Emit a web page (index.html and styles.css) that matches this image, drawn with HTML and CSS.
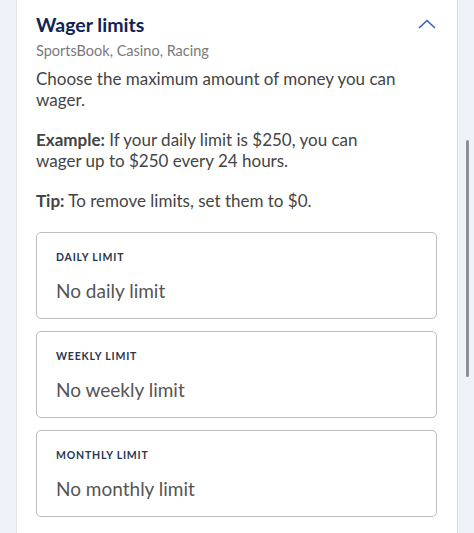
FILE: index.html
```html
<!DOCTYPE html>
<html lang="en">
<head>
    <meta charset="UTF-8">
    <meta name="viewport" content="width=device-width, initial-scale=1.0">
    <title>Wager limits</title>
    <link rel="stylesheet" href="styles.css">
</head>
<body>
    <div class="gutter"></div>

    <div class="panel">
        <div class="header">
            <h2 class="title">Wager limits</h2>
            <svg class="chevron" width="18" height="10" viewBox="0 0 18 10">
                <path d="M1 9 L9 1.5 L17 9" fill="none" stroke="#2e62bd" stroke-width="1.6"/>
            </svg>
        </div>
        <div class="subtitle">SportsBook, Casino, Racing</div>

        <p>Choose the maximum amount of money you can wager.</p>
        <p><strong>Example:</strong> If your daily limit is $250, you can wager up to $250 every 24 hours.</p>
        <p><strong>Tip:</strong> To remove limits, set them to $0.</p>

        <div class="limits">
            <div class="limit-box">
                <div class="limit-label">DAILY LIMIT</div>
                <div class="limit-value">No daily limit</div>
            </div>
            <div class="limit-box">
                <div class="limit-label">WEEKLY LIMIT</div>
                <div class="limit-value">No weekly limit</div>
            </div>
            <div class="limit-box">
                <div class="limit-label">MONTHLY LIMIT</div>
                <div class="limit-value">No monthly limit</div>
            </div>
        </div>
    </div>

    <div class="gutter right">
        <div class="thumb"></div>
    </div>
</body>
</html>
```

FILE: styles.css
```css
body {
    margin: 0;
    height: 533px;
    overflow: hidden;
    display: flex;
    background-color: #eef2f9;
    font-family: 'Lato', 'Helvetica Neue', Arial, sans-serif;
    color: #444;
}
.gutter {
    width: 16px;
    flex-shrink: 0;
}
.gutter.right {
    padding-left: 8px;
    width: 8px;
}
.thumb {
    width: 3px;
    height: 237px;
    margin-top: 140px;
    background-color: #8c8f96;
    border-radius: 2px;
}
.panel {
    flex: 1;
    background-color: #fff;
    border-left: 1px solid #e3e6ec;
    border-right: 1px solid #d9dce2;
    padding: 12px 20px 0 19px;
}
.header {
    display: flex;
    justify-content: space-between;
    align-items: center;
}
.title {
    margin: 0;
    font-size: 19.5px;
    font-weight: 700;
    color: #0f2452;
    line-height: 26px;
}
.chevron {
    margin-right: 1px;
    margin-top: -2px;
}
.subtitle {
    margin-top: 3px;
    font-size: 14.5px;
    color: #7a7a7a;
    line-height: 20px;
}
p {
    max-width: 362px;
    margin: 7px 0 19px;
    font-size: 17px;
    line-height: 21px;
}
p + p {
    margin-top: 0;
}
strong {
    font-weight: 700;
}
.limits {
    display: flex;
    flex-direction: column;
    gap: 12px;
    margin-top: 21px;
}
.limit-box {
    border: 1px solid #bdbdbd;
    border-radius: 5px;
    height: 85px;
    padding: 0 19px;
}
.limit-label {
    margin-top: 18px;
    font-size: 10.5px;
    letter-spacing: 0.8px;
    color: #2a3550;
    font-weight: 700;
}
.limit-value {
    margin-top: 16px;
    font-size: 19px;
    color: #555;
}
```
